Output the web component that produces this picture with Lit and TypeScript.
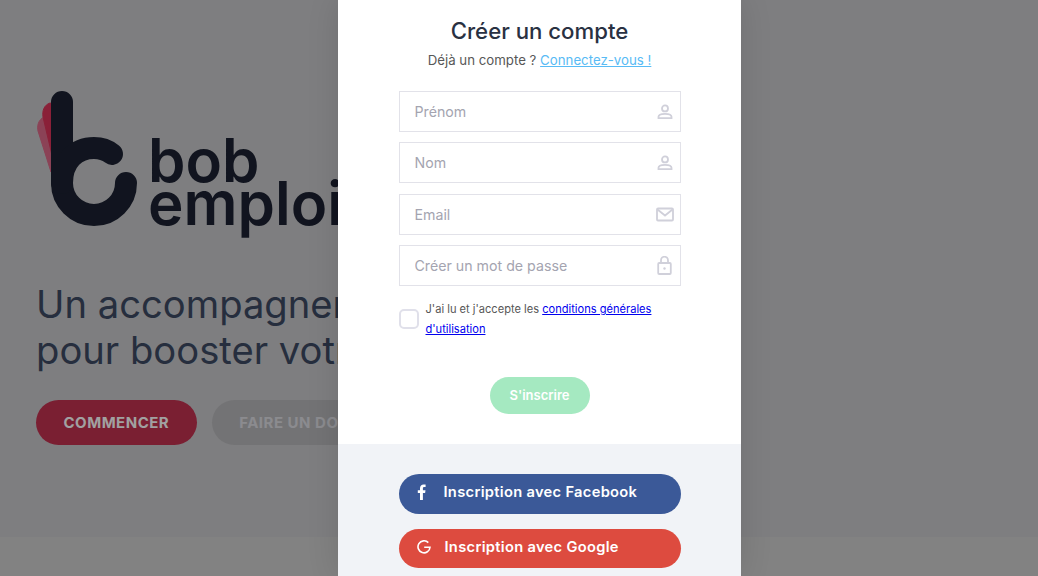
import { LitElement, html, css, svg } from 'lit';
import { customElement } from 'lit/decorators.js';

const userIcon = svg`<circle cx="8" cy="4.400" r="3" /><path d="M1.500 14.200v-1.400c0-1.800 2.600-3 6.500-3s6.500 1.200 6.500 3v1.400z" />`;
const mailIcon = svg`<rect x="1" y="1.500" width="16" height="12" rx="1" /><path d="M1.500 2.500 9 8.500l7.500-6" />`;
const lockIcon = svg`<rect x="1.200" y="7" width="12.600" height="11" rx="1" /><path d="M4 7V4.200a3.500 3.500 0 0 1 7 0V7" /><circle cx="7.500" cy="12.500" r="1.200" fill="#d0d0da" stroke="none" />`;

@customElement('app-root')
export class AppRoot extends LitElement {
  static override styles = css`
    :host {
      display: block;
      position: relative;
      width: 1038px;
      height: 576px;
      overflow: hidden;
      font-family: Inter, 'Noto Sans', sans-serif;
      background: #cfcfcf;
    }
    .page {
      height: 537px;
      padding: 91px 0 0 36px;
      box-sizing: border-box;
      background: #c8c8cb;
    }
    .logo {
      display: flex;
      align-items: flex-start;
      height: 149px;
    }
    .mark {
      display: block;
      flex: none;
    }
    .wordmark {
      margin: 48px 0 0 8px;
      font-size: 60px;
      line-height: 43px;
      font-weight: 600;
      color: #1b2131;
      white-space: nowrap;
    }
    h2 {
      margin: 41px 0 0;
      font-size: 38.200px;
      line-height: 46px;
      font-weight: 400;
      color: #3d4a62;
      white-space: nowrap;
    }
    .cta {
      display: flex;
      gap: 15px;
      margin-top: 27px;
    }
    .cta a {
      display: flex;
      align-items: center;
      height: 45px;
      padding: 0 27.500px;
      border-radius: 23px;
      font-size: 15px;
      font-weight: 700;
      letter-spacing: 0.500px;
      white-space: nowrap;
    }
    .primary {
      background: #c23150;
      color: #fff;
    }
    .muted {
      background: #b7b7ba;
      color: #dddde2;
    }
    .overlay {
      position: absolute;
      inset: 0;
      box-sizing: border-box;
      padding-left: 40px;
      display: flex;
      justify-content: center;
      background: rgba(0, 0, 0, 0.37);
    }
    .modal {
      width: 403px;
      height: 576px;
      background: #fff;
      box-shadow: 0 0 30px rgba(0, 0, 0, 0.12);
      display: flex;
      flex-direction: column;
    }
    .form {
      height: 444px;
      box-sizing: border-box;
      padding: 0 60px 0 61px;
    }
    h1 {
      margin: 16px 0 0;
      text-align: center;
      font-size: 22.200px;
      line-height: 30px;
      font-weight: 500;
      color: #293142;
    }
    .sub {
      margin: 4px 0 21px;
      text-align: center;
      font-size: 13.250px;
      line-height: 20px;
      color: #575757;
    }
    .sub a {
      color: #58bbf5;
    }
    .fields {
      display: flex;
      flex-direction: column;
      gap: 10.300px;
    }
    .field {
      display: flex;
      align-items: center;
      height: 41px;
      box-sizing: border-box;
      border: 1.500px solid #e2e2e9;
      padding: 0 6px 0 15px;
    }
    .field input {
      flex: 1;
      min-width: 0;
      border: 0;
      outline: 0;
      padding: 0;
      font: 400 14.200px Inter, sans-serif;
    }
    .field input::placeholder {
      color: #a4a4b0;
      opacity: 1;
    }
    .icon {
      flex: none;
      width: 18px;
      display: flex;
      justify-content: center;
    }
    .icon svg {
      fill: none;
      stroke: #d0d0da;
      stroke-width: 1.800;
    }
    .terms {
      display: flex;
      align-items: center;
      gap: 7px;
      margin-top: 13px;
      font-size: 11.100px;
      line-height: 20px;
      color: #575757;
    }
    .box {
      flex: none;
      width: 20px;
      height: 20px;
      box-sizing: border-box;
      border: 2px solid #e0e0ea;
      border-radius: 5px;
    }
    .terms a {
      color: #0000ee;
    }
    .submit {
      display: block;
      margin: 38px auto 0;
      width: 100px;
      height: 37px;
      padding: 0 0 1px;
      border: 0;
      border-radius: 19px;
      background: #a5e9c1;
      color: #fff;
      font: 600 13px Inter, sans-serif;
    }
    .social {
      flex: 1;
      background: #f1f3f7;
      padding: 30px 60px 0 61px;
      display: flex;
      flex-direction: column;
      gap: 15px;
    }
    .social a {
      display: flex;
      align-items: center;
      height: 39.500px;
      box-sizing: border-box;
      padding: 0 0 3px 18px;
      border-radius: 20px;
      color: #fff;
      font-size: 14.700px;
      font-weight: 600;
      letter-spacing: 0.300px;
      white-space: nowrap;
    }
    .social span {
      flex: none;
      width: 27px;
      display: flex;
    }
    .social .gg span {
      width: 28px;
    }
    .fb {
      background: #3b5998;
    }
    .gg {
      background: #dd4b3f;
    }
  `;

  private field(placeholder: string, type: string, icon: unknown, w: number, h: number) {
    return html`<label class="field">
      <input type=${type} placeholder=${placeholder} />
      <div class="icon">
        <svg width=${w} height=${h} viewBox="0 0 ${w} ${h}">${icon}</svg>
      </div>
    </label>`;
  }

  override render() {
    return html`
      <div class="page">
        <div class="logo">
          <svg class="mark" width="104" height="140" viewBox="36 91 104 140">
            <path d="M44 117c-6 3-7 9-6 14l13 41 4-56z" fill="#dc6988" stroke="#dc6988" stroke-linejoin="round" />
            <path d="M50 103c-6 2-8 8-7 14l12 51 8-62z" fill="#db3459" stroke="#db3459" stroke-linejoin="round" />
            <g fill="none" stroke="#1b2131" stroke-width="22" stroke-linecap="round">
              <path d="M62 102v81a32 32 0 0 0 64 0" />
              <path d="M62 183c0-22 14-35 32-35 7 0 13 2 18 6" />
            </g>
          </svg>
          <div class="wordmark">bob<br />emploi</div>
        </div>
        <h2>Un accompagnement personnalisé<br />pour booster votre recherche</h2>
        <div class="cta">
          <a class="primary">COMMENCER</a>
          <a class="muted">FAIRE UN DON</a>
        </div>
      </div>
      <div class="overlay">
        <div class="modal">
          <div class="form">
            <h1>Créer un compte</h1>
            <p class="sub">Déjà un compte ? <a href="#">Connectez-vous !</a></p>
            <div class="fields">
              ${this.field('Prénom', 'text', userIcon, 16, 16)}
              ${this.field('Nom', 'text', userIcon, 16, 16)}
              ${this.field('Email', 'email', mailIcon, 18, 15)}
              ${this.field('Créer un mot de passe', 'password', lockIcon, 15, 19)}
            </div>
            <div class="terms">
              <div class="box"></div>
              <div>J'ai lu et j'accepte les <a href="#">conditions générales</a><br /><a href="#">d'utilisation</a></div>
            </div>
            <button class="submit">S'inscrire</button>
          </div>
          <div class="social">
            <a class="fb">
              <span><svg width="10" height="16" viewBox="0 0 10 16"><path fill="#fff" d="M3 16V9H.800V6.300H3V4.300C3 1.700 4.500.400 6.600.400c.900 0 1.700.100 2 .100v2.400H7.300c-1.100 0-1.400.600-1.400 1.400v2H8.500L8.100 9H5.900v7z" /></svg></span>
              Inscription avec Facebook
            </a>
            <a class="gg">
              <span><svg width="14" height="14" viewBox="0 0 14 14"><path fill="none" stroke="#fff" stroke-width="1.600" d="M11.300 2.600A6 6 0 1 0 13 7.200H7.200" /></svg></span>
              Inscription avec Google
            </a>
          </div>
        </div>
      </div>
    `;
  }
}

declare global {
  interface HTMLElementTagNameMap {
    'app-root': AppRoot;
  }
}
